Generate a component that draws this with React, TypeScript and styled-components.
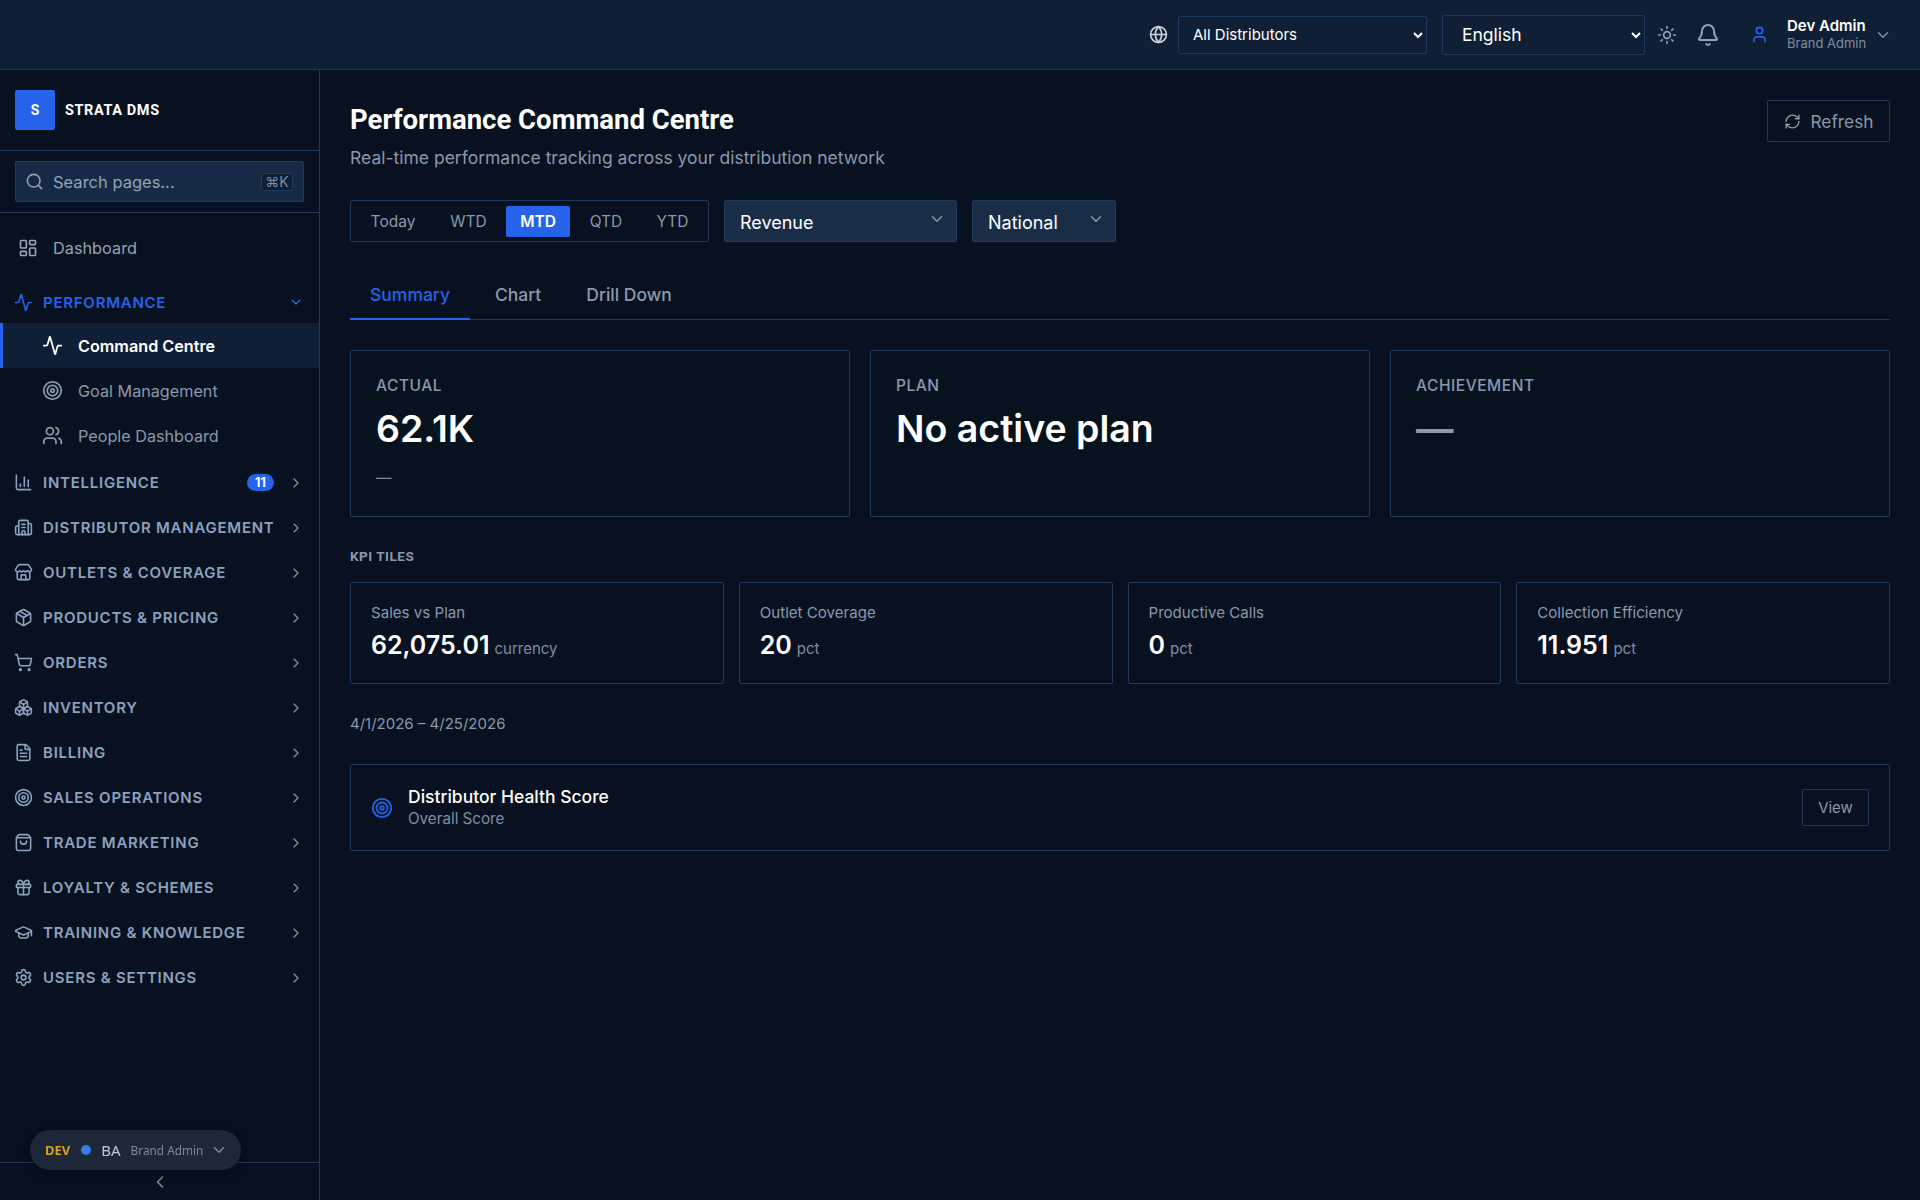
import React from "react";
import styled, { createGlobalStyle } from "styled-components";
import {
  Activity,
  Bell,
  Boxes,
  Building2,
  ChartColumn,
  ChevronDown,
  ChevronLeft,
  ChevronRight,
  FileText,
  Gift,
  Globe,
  GraduationCap,
  LayoutDashboard,
  Package,
  RefreshCw,
  Search,
  Settings,
  ShoppingBag,
  ShoppingCart,
  Store,
  Sun,
  Target,
  User,
  Users,
} from "lucide-react";

const GlobalStyle = createGlobalStyle`
  html, body { margin: 0; padding: 0; background: #07111f; }
  body { font-family: Inter, "Noto Sans", sans-serif; color: #fff; }
  * { box-sizing: border-box; }
  svg { flex-shrink: 0; }
`;

const Page = styled.div`
  height: 1200px;
  overflow: hidden;
  display: flex;
  flex-direction: column;
`;

const Topbar = styled.header`
  height: 70px;
  flex-shrink: 0;
  background: #0f1f35;
  border-bottom: 1px solid #1e3a5f;
  display: flex;
  align-items: center;
  justify-content: flex-end;
  padding: 0 28px 0 0;
`;

const NativeSelect = styled.select<{ $w: number; $h: number; $size: number; $pad: number; $ml: number }>`
  width: ${(p) => p.$w}px;
  height: ${(p) => p.$h}px;
  font-size: ${(p) => p.$size}px;
  font-family: Inter, sans-serif;
  padding: 0 2px 0 ${(p) => p.$pad}px;
  margin-left: ${(p) => p.$ml}px;
  background: #0f1f35;
  color: #fff;
  color-scheme: dark;
  border: 1px solid #1e3a5f;
  border-radius: 2px;
`;

const TopIcon = styled.span<{ $c?: string; $ml: number }>`
  display: inline-flex;
  margin-left: ${(p) => p.$ml}px;
  color: ${(p) => p.$c || "#94a3b8"};
`;

const UserBlock = styled.div`
  margin-left: 18px;
  display: flex;
  flex-direction: column;
  width: 87px;
`;

const UserName = styled.div`
  font-size: 15px;
  font-weight: 600;
  line-height: 18px;
`;

const UserRole = styled.div`
  font-size: 13px;
  color: #7f8ea3;
  line-height: 17px;
`;

const Body = styled.div`
  flex: 1;
  display: flex;
  min-height: 0;
`;

const Sidebar = styled.aside`
  width: 320px;
  flex-shrink: 0;
  border-right: 1px solid #1e3a5f;
  background: #07111f;
  display: flex;
  flex-direction: column;
`;

const Brand = styled.div`
  height: 81px;
  border-bottom: 1px solid #1e3a5f;
  display: flex;
  align-items: center;
  gap: 10px;
  padding: 0 15px;
`;

const LogoBox = styled.div`
  width: 40px;
  height: 40px;
  background: #2563eb;
  border-radius: 2px;
  display: flex;
  align-items: center;
  justify-content: center;
  font-family: Roboto, sans-serif;
  font-size: 14px;
  font-weight: 700;
`;

const BrandName = styled.div`
  font-family: Roboto, sans-serif;
  font-size: 14.5px;
  font-weight: 700;
  letter-spacing: 0.6px;
`;

const SearchWrap = styled.div`
  height: 62px;
  border-bottom: 1px solid #1e3a5f;
  padding: 10px 15px;
`;

const SearchBox = styled.div`
  height: 41px;
  background: #162a45;
  border: 1px solid #1e3a5f;
  border-radius: 2px;
  display: flex;
  align-items: center;
  padding: 0 10px 0 9px;
  color: #94a3b8;
  font-size: 16.5px;
`;

const SearchText = styled.span`
  margin-left: 9px;
  flex: 1;
`;

const Kbd = styled.span`
  width: 32px;
  height: 18px;
  border: 1px solid #1e3a5f;
  border-radius: 2px;
  background: #0f1f35;
  font-size: 14px;
  line-height: 15px;
  text-align: center;
  color: #7f8ea3;
`;

const Nav = styled.nav`
  flex: 1;
  padding-top: 12px;
`;

const DashRow = styled.div`
  height: 45px;
  display: flex;
  align-items: center;
  padding-left: 18px;
  gap: 15px;
  font-size: 16.3px;
  color: #94a3b8;
  margin-bottom: 11px;
`;

const GroupRow = styled.div<{ $open?: boolean }>`
  height: ${(p) => (p.$open ? 42 : 45)}px;
  display: flex;
  align-items: center;
  padding: 0 15px 0 14px;
  gap: 10px;
  font-size: 15px;
  font-weight: 600;
  letter-spacing: 0.75px;
  white-space: nowrap;
  color: ${(p) => (p.$open ? "#2563eb" : "#8ca2bf")};
`;

const GroupLabel = styled.span`
  flex: 1;
`;

const Badge = styled.span`
  background: #2563eb;
  color: #fff;
  border-radius: 9px;
  width: 27px;
  height: 17px;
  font-size: 12.5px;
  font-weight: 700;
  letter-spacing: 0;
  line-height: 17px;
  text-align: center;
  margin-right: 4px;
`;

const GroupChevron = styled.span`
  display: inline-flex;
  color: #7f8ea3;
`;

const SubList = styled.div`
  margin-bottom: 2px;
`;

const SubRow = styled.div<{ $active?: boolean }>`
  height: 45px;
  display: flex;
  align-items: center;
  gap: 15px;
  padding-left: 39px;
  font-size: 16.2px;
  font-weight: ${(p) => (p.$active ? 600 : 400)};
  color: ${(p) => (p.$active ? "#fff" : "#8a99ad")};
  background: ${(p) => (p.$active ? "#0f1f35" : "transparent")};
  border-left: 3px solid ${(p) => (p.$active ? "#2563eb" : "transparent")};
`;

const Collapse = styled.div`
  height: 38px;
  border-top: 1px solid #1e3a5f;
  display: flex;
  align-items: center;
  justify-content: center;
  color: #7f8ea3;
`;

const DevPill = styled.div`
  position: fixed;
  left: 30px;
  top: 1130px;
  width: 211px;
  height: 40px;
  border-radius: 20px;
  background: #1c2838;
  box-shadow: 0 4px 14px rgba(0, 0, 0, 0.35);
  display: flex;
  align-items: center;
  padding: 0 0 0 15px;
  font-family: "Noto Sans", sans-serif;
`;

const DevTag = styled.span`
  font-size: 13px;
  font-weight: 700;
  color: #d6a020;
`;

const DevDot = styled.span`
  width: 10px;
  height: 10px;
  flex-shrink: 0;
  border-radius: 50%;
  background: #3b7ae8;
  margin: 0 10px 0 11px;
`;

const DevRole = styled.span`
  font-size: 15px;
  color: #c4cad3;
  margin-right: 10px;
`;

const DevName = styled.span`
  font-size: 11.8px;
  color: #7f8a99;
  margin-right: 7px;
  white-space: nowrap;
`;

const Main = styled.main`
  flex: 1;
  padding: 30px 30px 0 30px;
  min-width: 0;
`;

const TitleRow = styled.div`
  display: flex;
  justify-content: space-between;
  align-items: flex-start;
`;

const Title = styled.h1`
  margin: 0;
  font-family: Roboto, sans-serif;
  font-size: 27.5px;
  font-weight: 700;
  line-height: 40px;
  letter-spacing: 0;
`;

const Subtitle = styled.p`
  margin: 6px 0 0;
  font-size: 17.5px;
  line-height: 24px;
  color: #8a99ad;
`;

const RefreshButton = styled.button`
  width: 123px;
  height: 42px;
  background: transparent;
  border: 1px solid #1e3a5f;
  border-radius: 2px;
  color: #8a99ad;
  font-family: Inter, sans-serif;
  font-size: 17.3px;
  padding-top: 2px;
  display: flex;
  align-items: center;
  justify-content: center;
  gap: 10px;
`;

const FilterRow = styled.div`
  display: flex;
  gap: 15px;
  margin-top: 30px;
`;

const Segment = styled.div`
  width: 359px;
  height: 42px;
  border: 1px solid #1e3a5f;
  border-radius: 2px;
  display: flex;
  align-items: center;
  padding: 0 4px;
`;

const SegmentItem = styled.span<{ $active?: boolean; $w: number }>`
  width: ${(p) => p.$w}px;
  height: 31px;
  display: flex;
  align-items: center;
  justify-content: center;
  font-size: 15.5px;
  font-weight: ${(p) => (p.$active ? 600 : 400)};
  border-radius: 2px;
  color: ${(p) => (p.$active ? "#fff" : "#8a99ad")};
  background: ${(p) => (p.$active ? "#2563eb" : "transparent")};
`;

const Dropdown = styled.div<{ $w: number }>`
  width: ${(p) => p.$w}px;
  height: 42px;
  background: #1a2d47;
  border: 1px solid #1e3a5f;
  border-radius: 2px;
  display: flex;
  align-items: center;
  justify-content: space-between;
  padding: 2px 10px 0 15px;
  font-size: 18px;
`;

const DropChevron = styled.span`
  display: inline-flex;
  color: #8a99ad;
  margin-top: -7px;
`;

const Tabs = styled.div`
  display: flex;
  margin-top: 33px;
  border-bottom: 1px solid #1e3a5f;
  height: 45px;
`;

const Tab = styled.div<{ $active?: boolean }>`
  padding: 0 20px 5px;
  margin-right: 5px;
  margin-bottom: -1px;
  display: flex;
  align-items: center;
  font-size: 17.5px;
  font-weight: 500;
  color: ${(p) => (p.$active ? "#2563eb" : "#8a99ad")};
  border-bottom: 2px solid ${(p) => (p.$active ? "#2563eb" : "transparent")};
`;

const CardGrid = styled.div`
  display: grid;
  grid-template-columns: repeat(3, 1fr);
  gap: 20px;
  margin-top: 30px;
`;

const Card = styled.div`
  height: 167px;
  border: 1px solid #1e3a5f;
  border-radius: 2px;
  padding: 25px;
  background: #07121f;
`;

const CardLabel = styled.div`
  font-size: 15.5px;
  font-weight: 500;
  letter-spacing: 0.55px;
  line-height: 20px;
  color: #8a99ad;
`;

const CardValue = styled.div<{ $muted?: boolean }>`
  font-size: 37.5px;
  font-weight: 600;
  line-height: 46px;
  margin-top: 10px;
  color: ${(p) => (p.$muted ? "#8a99ad" : "#fff")};
`;

const CardNote = styled.div`
  font-size: 15.5px;
  color: #7f8ea3;
  margin-top: 16px;
`;

const SectionLabel = styled.div`
  margin-top: 30px;
  font-family: Roboto, sans-serif;
  font-size: 13.5px;
  font-weight: 700;
  letter-spacing: 0.5px;
  line-height: 18px;
  color: #8a99ad;
`;

const TileGrid = styled.div`
  display: grid;
  grid-template-columns: repeat(4, 1fr);
  gap: 15px;
  margin-top: 17px;
`;

const Tile = styled.div`
  height: 102px;
  border: 1px solid #1e3a5f;
  border-radius: 2px;
  padding: 20px;
`;

const TileLabel = styled.div`
  font-size: 15.1px;
  line-height: 20px;
  color: #8a99ad;
`;

const TileValue = styled.div`
  margin-top: 6px;
  display: flex;
  align-items: baseline;
  gap: 5px;
`;

const TileNumber = styled.span`
  font-size: 25px;
  font-weight: 600;
  line-height: 32px;
`;

const TileUnit = styled.span`
  font-size: 15px;
  color: #7f8ea3;
`;

const DateText = styled.div`
  margin-top: 30px;
  font-size: 15px;
  line-height: 20px;
  color: #8a99ad;
`;

const HealthCard = styled.div`
  margin-top: 30px;
  height: 87px;
  border: 1px solid #1e3a5f;
  border-radius: 2px;
  padding: 0 20px;
  display: flex;
  align-items: center;
`;

const HealthIcon = styled.span`
  display: inline-flex;
  color: #2563eb;
  margin-right: 15px;
`;

const HealthText = styled.div`
  flex: 1;
`;

const HealthTitle = styled.div`
  font-size: 17.5px;
  font-weight: 500;
  line-height: 22px;
`;

const HealthSub = styled.div`
  font-size: 15.2px;
  line-height: 21px;
  color: #7f8ea3;
`;

const ViewButton = styled.button`
  width: 67px;
  height: 37px;
  background: transparent;
  border: 1px solid #1e3a5f;
  border-radius: 2px;
  color: #8a99ad;
  font-family: Inter, sans-serif;
  font-size: 15px;
`;

const groups: { label: string; Icon: React.ElementType; badge?: string }[] = [
  { label: "Intelligence", Icon: ChartColumn, badge: "11" },
  { label: "Distributor Management", Icon: Building2 },
  { label: "Outlets & Coverage", Icon: Store },
  { label: "Products & Pricing", Icon: Package },
  { label: "Orders", Icon: ShoppingCart },
  { label: "Inventory", Icon: Boxes },
  { label: "Billing", Icon: FileText },
  { label: "Sales Operations", Icon: Target },
  { label: "Trade Marketing", Icon: ShoppingBag },
  { label: "Loyalty & Schemes", Icon: Gift },
  { label: "Training & Knowledge", Icon: GraduationCap },
  { label: "Users & Settings", Icon: Settings },
];

const periods = [
  { label: "Today", w: 76 },
  { label: "WTD", w: 75 },
  { label: "MTD", w: 64, active: true },
  { label: "QTD", w: 72 },
  { label: "YTD", w: 61 },
];

const tiles = [
  { label: "Sales vs Plan", value: "62,075.01", unit: "currency" },
  { label: "Outlet Coverage", value: "20", unit: "pct" },
  { label: "Productive Calls", value: "0", unit: "pct" },
  { label: "Collection Efficiency", value: "11.951", unit: "pct" },
];

const App = () => {
  return (
    <Page>
      <GlobalStyle />
      <Topbar>
        <Globe size={19} color="#cbd5e1" />
        <NativeSelect $w={249} $h={38} $size={15} $pad={10} $ml={10}>
          <option>All Distributors</option>
        </NativeSelect>
        <NativeSelect $w={203} $h={40} $size={17.5} $pad={15} $ml={15}>
          <option>English</option>
        </NativeSelect>
        <TopIcon $ml={12}>
          <Sun size={20} />
        </TopIcon>
        <TopIcon $ml={19}>
          <Bell size={24} />
        </TopIcon>
        <TopIcon $ml={30} $c="#2563eb">
          <User size={19} />
        </TopIcon>
        <UserBlock>
          <UserName>Dev Admin</UserName>
          <UserRole>Brand Admin</UserRole>
        </UserBlock>
        <TopIcon $ml={0} $c="#7f8ea3">
          <ChevronDown size={18} />
        </TopIcon>
      </Topbar>
      <Body>
        <Sidebar>
          <Brand>
            <LogoBox>S</LogoBox>
            <BrandName>STRATA DMS</BrandName>
          </Brand>
          <SearchWrap>
            <SearchBox>
              <Search size={19} />
              <SearchText>Search pages...</SearchText>
              <Kbd>⌘K</Kbd>
            </SearchBox>
          </SearchWrap>
          <Nav>
            <DashRow>
              <LayoutDashboard size={20} />
              Dashboard
            </DashRow>
            <GroupRow $open>
              <Activity size={19} />
              <GroupLabel>PERFORMANCE</GroupLabel>
              <ChevronDown size={16} />
            </GroupRow>
            <SubList>
              <SubRow $active>
                <Activity size={21} />
                Command Centre
              </SubRow>
              <SubRow>
                <Target size={21} />
                Goal Management
              </SubRow>
              <SubRow>
                <Users size={21} />
                People Dashboard
              </SubRow>
            </SubList>
            {groups.map(({ label, Icon, badge }) => (
              <GroupRow key={label}>
                <Icon size={19} />
                <GroupLabel>{label.toUpperCase()}</GroupLabel>
                {badge && <Badge>{badge}</Badge>}
                <GroupChevron>
                  <ChevronRight size={16} />
                </GroupChevron>
              </GroupRow>
            ))}
          </Nav>
          <Collapse>
            <ChevronLeft size={20} />
          </Collapse>
        </Sidebar>
        <Main>
          <TitleRow>
            <div>
              <Title>Performance Command Centre</Title>
              <Subtitle>Real-time performance tracking across your distribution network</Subtitle>
            </div>
            <RefreshButton>
              <RefreshCw size={17} />
              Refresh
            </RefreshButton>
          </TitleRow>
          <FilterRow>
            <Segment>
              {periods.map((p) => (
                <SegmentItem key={p.label} $active={p.active} $w={p.w}>
                  {p.label}
                </SegmentItem>
              ))}
            </Segment>
            <Dropdown $w={233}>
              Revenue
              <DropChevron>
                <ChevronDown size={18} />
              </DropChevron>
            </Dropdown>
            <Dropdown $w={144}>
              National
              <DropChevron>
                <ChevronDown size={18} />
              </DropChevron>
            </Dropdown>
          </FilterRow>
          <Tabs>
            <Tab $active>Summary</Tab>
            <Tab>Chart</Tab>
            <Tab>Drill Down</Tab>
          </Tabs>
          <CardGrid>
            <Card>
              <CardLabel>ACTUAL</CardLabel>
              <CardValue>62.1K</CardValue>
              <CardNote>—</CardNote>
            </Card>
            <Card>
              <CardLabel>PLAN</CardLabel>
              <CardValue>No active plan</CardValue>
            </Card>
            <Card>
              <CardLabel>ACHIEVEMENT</CardLabel>
              <CardValue $muted>—</CardValue>
            </Card>
          </CardGrid>
          <SectionLabel>KPI TILES</SectionLabel>
          <TileGrid>
            {tiles.map((t) => (
              <Tile key={t.label}>
                <TileLabel>{t.label}</TileLabel>
                <TileValue>
                  <TileNumber>{t.value}</TileNumber>
                  <TileUnit>{t.unit}</TileUnit>
                </TileValue>
              </Tile>
            ))}
          </TileGrid>
          <DateText>4/1/2026 – 4/25/2026</DateText>
          <HealthCard>
            <HealthIcon>
              <Target size={22} />
            </HealthIcon>
            <HealthText>
              <HealthTitle>Distributor Health Score</HealthTitle>
              <HealthSub>Overall Score</HealthSub>
            </HealthText>
            <ViewButton>View</ViewButton>
          </HealthCard>
        </Main>
      </Body>
      <DevPill>
        <DevTag>DEV</DevTag>
        <DevDot />
        <DevRole>BA</DevRole>
        <DevName>Brand Admin</DevName>
        <ChevronDown size={18} color="#7f8a99" />
      </DevPill>
    </Page>
  );
};

export default App;
